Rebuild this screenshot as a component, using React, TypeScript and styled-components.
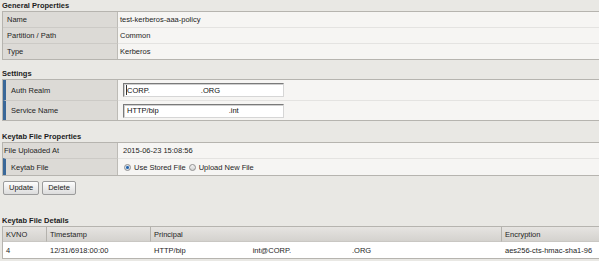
import React from 'react';
import styled, { createGlobalStyle } from 'styled-components';

const GlobalStyle = createGlobalStyle`
  html, body {
    margin: 0;
    padding: 0;
  }
  body {
    background: #e9e8e4;
    font-family: "Liberation Sans", Arial, sans-serif;
    font-size: 7.5px;
    color: #1e1e1e;
    overflow: hidden;
  }
`;

const Page = styled.div`
  width: 599px;
  padding-left: 2px;
  box-sizing: border-box;
  overflow: hidden;
`;

const Section = styled.section<{ $gap?: number }>`
  margin-top: ${p => p.$gap ?? 0}px;
`;

const Title = styled.div`
  height: 11px;
  line-height: 11px;
  font-weight: bold;
  color: #1c1c1c;
`;

const PropList = styled.div`
  width: 640px;
  border-top: 1px solid #b6b4af;
  border-bottom: 1px solid #b6b4af;
  border-left: 1px solid #b6b4af;
`;

const Row = styled.div<{ $h: number }>`
  display: flex;
  height: ${p => p.$h}px;
  &:not(:first-child) > div {
    border-top: 1px solid rgba(0, 0, 0, 0.07);
  }
`;

const Label = styled.div<{ $required?: boolean; $pad?: number }>`
  box-sizing: border-box;
  flex: none;
  width: 115px;
  display: flex;
  align-items: center;
  background: #dcdad6;
  border-right: 1px solid #bdbbb6;
  border-left: ${p => (p.$required ? '3px solid #3a6899' : 'none')};
  padding-left: ${p => p.$pad ?? 4}px;
  white-space: nowrap;
`;

const Value = styled.div<{ $pad?: number }>`
  box-sizing: border-box;
  flex: 1;
  display: flex;
  align-items: center;
  background: #f6f5f3;
  padding-left: ${p => p.$pad ?? 5}px;
  white-space: nowrap;
`;

const Field = styled.div`
  box-sizing: border-box;
  width: 161px;
  height: 14px;
  display: flex;
  align-items: center;
  padding-left: 3px;
  background: #fff;
  border: 1px solid;
  border-color: #7a7a7a #d6d6d6 #d6d6d6 #7a7a7a;
  box-shadow: inset 1px 1px 0 #cfcfcf;
  color: #111;
`;

const Caret = styled.span`
  flex: none;
  width: 1px;
  height: 10px;
  margin-left: -1px;
  background: #333;
`;

const Redacted = styled.span<{ $w: number }>`
  display: inline-block;
  flex: none;
  width: ${p => p.$w}px;
`;

const RadioOption = styled.label`
  display: inline-flex;
  align-items: center;
  margin-right: 3px;
`;

const Radio = styled.span<{ $checked?: boolean }>`
  box-sizing: border-box;
  flex: none;
  width: 7px;
  height: 7px;
  margin-right: 3px;
  border-radius: 50%;
  border: 1px solid #8f8f8f;
  background: ${p =>
    p.$checked
      ? 'radial-gradient(circle, #1f5fa8 0, #2f6db3 1.2px, #dde4ec 1.8px, #c9cfd6 100%)'
      : 'linear-gradient(#f4f4f4, #d2d2d2)'};
`;

const ButtonRow = styled.div`
  display: flex;
  gap: 3px;
  margin-top: 5px;
  padding-left: 1px;
`;

const Button = styled.button`
  height: 14px;
  padding: 0 5px;
  font-family: inherit;
  font-size: 7.5px;
  color: #222;
  border: 1px solid #9b9b9b;
  border-radius: 2px;
  background: linear-gradient(#fdfdfd, #dcdcdc);
  line-height: 12px;
`;

const DetailGrid = styled.div`
  width: 640px;
  display: grid;
  grid-template-columns: 44px 104px 351px 1fr;
  border-top: 1px solid #b6b4af;
  border-bottom: 1px solid #b6b4af;
  border-left: 1px solid #b6b4af;
`;

const Th = styled.div`
  box-sizing: border-box;
  height: 15px;
  display: flex;
  align-items: center;
  padding-left: 3px;
  background: linear-gradient(#e6e4e1, #d4d2ce);
  border-right: 1px solid #b4b2ad;
  border-bottom: 1px solid #c9c7c3;
`;

const Td = styled.div`
  box-sizing: border-box;
  height: 16px;
  display: flex;
  align-items: center;
  padding-left: 3px;
  background: #fff;
  white-space: nowrap;
`;

export default function App() {
  return (
    <Page>
      <GlobalStyle />

      <Section>
        <Title>General Properties</Title>
        <PropList>
          <Row $h={15}>
            <Label>Name</Label>
            <Value $pad={2}>test-kerberos-aaa-policy</Value>
          </Row>
          <Row $h={16}>
            <Label>Partition / Path</Label>
            <Value $pad={2}>Common</Value>
          </Row>
          <Row $h={16}>
            <Label>Type</Label>
            <Value $pad={2}>Kerberos</Value>
          </Row>
        </PropList>
      </Section>

      <Section $gap={8}>
        <Title>Settings</Title>
        <PropList>
          <Row $h={20}>
            <Label $required $pad={5}>Auth Realm</Label>
            <Value>
              <Field>
                <Caret />
                <span>CORP.</span>
                <Redacted $w={51} />
                <span>.ORG</span>
              </Field>
            </Value>
          </Row>
          <Row $h={20}>
            <Label $required $pad={5}>Service Name</Label>
            <Value>
              <Field>
                <span>HTTP/bip</span>
                <Redacted $w={70} />
                <span>.int</span>
              </Field>
            </Value>
          </Row>
        </PropList>
      </Section>

      <Section $gap={10}>
        <Title>Keytab File Properties</Title>
        <PropList>
          <Row $h={15}>
            <Label $pad={1}>File Uploaded At</Label>
            <Value>2015-06-23 15:08:56</Value>
          </Row>
          <Row $h={17}>
            <Label $required $pad={5}>Keytab File</Label>
            <Value $pad={6}>
              <RadioOption>
                <Radio $checked />
                Use Stored File
              </RadioOption>
              <RadioOption>
                <Radio />
                Upload New File
              </RadioOption>
            </Value>
          </Row>
        </PropList>
        <ButtonRow>
          <Button>Update</Button>
          <Button>Delete</Button>
        </ButtonRow>
      </Section>

      <Section $gap={20}>
        <Title>Keytab File Details</Title>
        <DetailGrid>
          <Th>KVNO</Th>
          <Th>Timestamp</Th>
          <Th>Principal</Th>
          <Th>Encryption</Th>
          <Td>4</Td>
          <Td>12/31/6918:00:00</Td>
          <Td>
            <span>HTTP/bip</span>
            <Redacted $w={67} />
            <span>int@CORP.</span>
            <Redacted $w={61} />
            <span>.ORG</span>
          </Td>
          <Td>aes256-cts-hmac-sha1-96</Td>
        </DetailGrid>
      </Section>
    </Page>
  );
}
